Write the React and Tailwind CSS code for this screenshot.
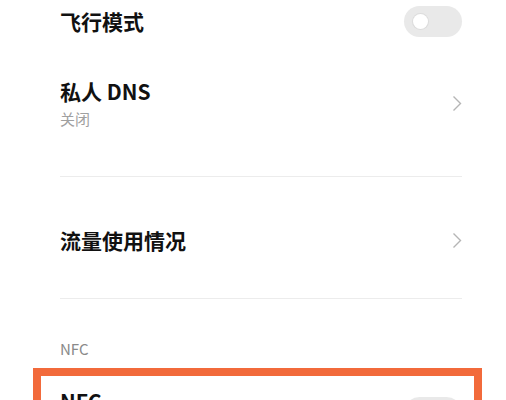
import React from 'react';

const font = { fontFamily: '"Noto Sans CJK SC", "Noto Sans", sans-serif' };

function Toggle() {
  return (
    <div className="relative h-[31px] w-[58px] shrink-0 rounded-full bg-[#e9e9e9]">
      <div className="absolute left-[9px] top-[8px] h-[15px] w-[15px] rounded-full bg-white ring-1 ring-[#dcdcdc]" />
    </div>
  );
}

function Chevron() {
  return (
    <svg width="10" height="17" viewBox="0 0 10 17" className="shrink-0">
      <path d="M1.5 1.5 L8.5 8.5 L1.5 15.5" fill="none" stroke="#b5b5b5" strokeWidth="1.4" />
    </svg>
  );
}

export default function App() {
  return (
    <div className="h-[400px] w-[506px] overflow-hidden bg-white text-[#111]" style={font}>
      <div className="flex h-[42px] items-center justify-between pl-[60px] pr-[44px]">
        <span className="text-[21px] font-semibold leading-[24px]">飞行模式</span>
        <Toggle />
      </div>

      <div className="flex items-center justify-between pl-[60px] pr-[44px] pt-[37px]">
        <div className="flex flex-col">
          <span className="text-[21px] font-semibold leading-[24px]">私人 DNS</span>
          <span className="mt-[7px] text-[15px] leading-[18px] text-[#a0a0a0]">关闭</span>
        </div>
        <Chevron />
      </div>

      <div className="ml-[60px] mr-[44px] mt-[48px] h-px bg-[#ececec]" />

      <div className="mt-[51px] flex items-center justify-between pl-[60px] pr-[44px]">
        <span className="text-[21px] font-semibold leading-[24px]">流量使用情况</span>
        <Chevron />
      </div>

      <div className="ml-[60px] mr-[44px] mt-[46px] h-px bg-[#ececec]" />

      <div className="mt-[40px] pl-[60px] text-[15px] leading-[20px] text-[#8a8a8a]">NFC</div>

      <div className="ml-[33px] mr-[24px] mt-[9px] h-[60px] border-[8px] border-[#f26a3b]">
        <div className="flex items-start justify-between pl-[19px] pr-[12px] pt-[13px]">
          <span className="text-[21px] font-semibold leading-[24px]">NFC</span>
          <div className="mt-[8px]">
            <Toggle />
          </div>
        </div>
      </div>
    </div>
  );
}
